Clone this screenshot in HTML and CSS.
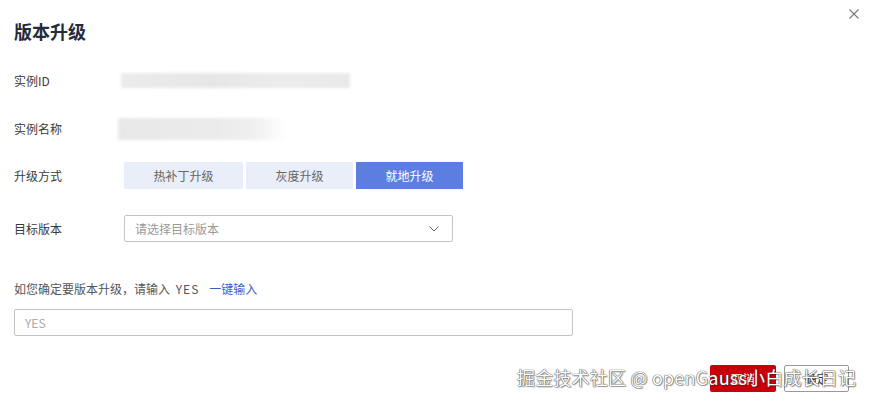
FILE: index.html
```html
<!DOCTYPE html>
<html lang="zh">
<head>
<meta charset="utf-8">
<link rel="stylesheet" href="styles.css">
</head>
<body>
<div class="dialog">
  <button class="close" aria-label="关闭">
    <svg width="10" height="10" viewBox="0 0 10 10"><path d="M0.5 0.5 L9.5 9.5 M9.5 0.5 L0.5 9.5" stroke="#777" stroke-width="1.1" fill="none"/></svg>
  </button>
  <h1 class="title">版本升级</h1>
  <div class="row r1">
    <div class="label">实例ID</div>
    <div class="blur blur-id"></div>
  </div>
  <div class="row r2">
    <div class="label">实例名称</div>
    <div class="blur blur-name"></div>
  </div>
  <div class="row r3">
    <div class="label">升级方式</div>
    <div class="seg">
      <div class="seg-btn w1">热补丁升级</div>
      <div class="seg-btn w2">灰度升级</div>
      <div class="seg-btn w2 active">就地升级</div>
    </div>
  </div>
  <div class="row r4">
    <div class="label">目标版本</div>
    <div class="select">
      <span class="ph">请选择目标版本</span>
      <svg width="10" height="6" viewBox="0 0 10 6"><path d="M0.5 0.5 L5 5 L9.5 0.5" stroke="#666" stroke-width="1" fill="none"/></svg>
    </div>
  </div>
  <p class="hint">如您确定要版本升级，请输入 <span class="yes">YES</span><a class="link">一键输入</a></p>
  <div class="input"><span class="ph2">YES</span></div>
  <div class="footer">
    <div class="btn cancel">取消</div>
    <div class="btn ok">确定</div>
  </div>
  <div class="watermark">掘金技术社区 @ openGauss小白成长日记</div>
</div>
</body>
</html>
```
FILE: styles.css
```css
* { box-sizing: border-box; }
html, body { margin: 0; padding: 0; background: #fff; }
body { font-family: "Noto Sans CJK SC", "Noto Sans", sans-serif; color: #333; font-size: 12px; }
.dialog { position: relative; width: 870px; height: 400px; padding: 19px 14px 0 14px; }
.close { position: absolute; left: 849px; top: 9px; width: 10px; height: 10px; padding: 0; border: 0; background: none; display: block; }
.close svg { display: block; }
.title { margin: 0; font-size: 18px; line-height: 24px; font-weight: 700; color: #252b3a; }
.row { display: flex; align-items: center; height: 27px; }
.r1 { margin-top: 24px; }
.r2 { margin-top: 21px; }
.r3 { margin-top: 20px; }
.r4 { margin-top: 26px; }
.label { width: 110px; flex: none; line-height: 27px; color: #3a3a3a; }
.blur { filter: blur(1.5px); }
.blur-id { margin-left: -3px; width: 229px; height: 15px; background: linear-gradient(90deg, #ebebeb, #e6e6e6 40%, #ececec 70%, #e9e9e9); }
.blur-name { margin-left: -6px; width: 168px; height: 22px; background: linear-gradient(90deg, #e8e8e8, #ebebeb 60%, #efefef 80%, rgba(255,255,255,0)); }
.seg { display: flex; gap: 3px; }
.seg-btn { height: 27px; line-height: 27px; text-align: center; background: #e9eef9; color: #666; }
.w1 { width: 119px; }
.w2 { width: 107px; }
.seg-btn.active { background: #5c7ee0; color: #fff; }
.select { width: 329px; height: 27px; border: 1px solid #c4c4c4; border-radius: 2px; display: flex; align-items: center; justify-content: space-between; padding: 0 13px 0 10px; }
.ph { color: #999; }
.select svg { display: block; }
.hint { margin: 37px 0 0 0; line-height: 20px; color: #555; }
.yes { margin-left: 3px; letter-spacing: 1px; }
.link { margin-left: 10px; color: #3d5fc8; }
.input { margin-top: 10px; width: 559px; height: 27px; border: 1px solid #c4c4c4; border-radius: 2px; display: flex; align-items: center; padding-left: 10px; }
.ph2 { color: #aaa; }
.footer { display: flex; justify-content: flex-end; gap: 8px; margin-top: 29px; padding-right: 7px; }
.btn { width: 66px; height: 27px; line-height: 25px; text-align: center; border-radius: 2px; border: 1px solid transparent; }
.cancel { background: #c7000b; color: #fff; }
.ok { width: 65px; background: #fff; border-color: #999; color: #333; }
.watermark { position: absolute; left: 517px; top: 364px; font-size: 18px; line-height: 26px; letter-spacing: 0.2px; color: #fff; white-space: nowrap; text-shadow: 0 0 1px #444, 0 0 1px #444, 1px 1px 1px rgba(0,0,0,0.35); }
```
